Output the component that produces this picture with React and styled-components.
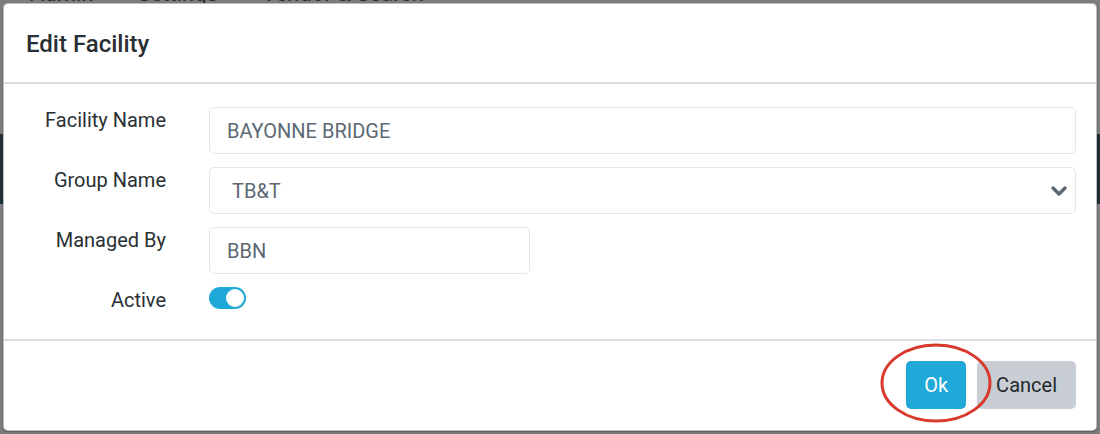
import React from "react";
import styled, { createGlobalStyle } from "styled-components";

const Global = createGlobalStyle`
  html, body { margin: 0; padding: 0; }
  body {
    width: 1100px;
    height: 434px;
    overflow: hidden;
    background: #7d7d7d;
    font-family: Roboto, "Liberation Sans", Arial, sans-serif;
  }
  * { box-sizing: border-box; }
`;

const Backdrop = styled.div`
  position: relative;
  width: 1100px;
  height: 434px;
  overflow: hidden;
  background: #7d7d7d;
  display: flex;
  flex-direction: column;
`;

const NavBar = styled.div`
  display: flex;
  gap: 44px;
  height: 20px;
  margin-top: -16px;
  padding-left: 30px;
  align-items: flex-end;
  font-size: 22px;
  line-height: 20px;
  color: #2b2b2b;
`;

const SideRow = styled.div`
  display: flex;
  justify-content: space-between;
  margin-top: 130px;
`;

const SideStripe = styled.div`
  width: 4px;
  height: 70px;
  background: #1f303a;
`;

const Modal = styled.div`
  position: absolute;
  top: 3px;
  left: 3px;
  width: 1094px;
  height: 428px;
  background: #fff;
  border: 1px solid rgba(0, 0, 0, 0.25);
  border-radius: 5px;
  box-shadow: 0 1px 2px rgba(0, 0, 0, 0.35);
  display: flex;
  flex-direction: column;
`;

const Header = styled.div`
  height: 80px;
  flex: none;
  display: flex;
  align-items: center;
  padding: 0 22px;
  border-bottom: 2px solid #d9dfe2;
`;

const Title = styled.h2`
  margin: 0;
  font-size: 24px;
  font-weight: 500;
  color: #2a2f33;
  line-height: 1.2;
  padding-top: 2px;
`;

const Body = styled.div`
  flex: 1;
  padding: 23px 20px 0 20px;
  display: flex;
  flex-direction: column;
  gap: 13px;
`;

const Row = styled.div`
  display: grid;
  grid-template-columns: 142px 1fr;
  column-gap: 43px;
  align-items: start;
`;

const Label = styled.label`
  text-align: right;
  font-size: 20px;
  line-height: 24px;
  padding-top: 1px;
  color: #2a2f33;
`;

const Input = styled.input`
  display: block;
  width: ${(p) => p.$width || "100%"};
  height: 47px;
  border: 1px solid #e4e7ea;
  border-radius: 5px;
  padding: 0 17px;
  font-family: inherit;
  font-size: 20px;
  color: #5c6873;
  background: #fff;
  outline: none;
`;

const SelectBox = styled.div`
  height: 47px;
  border: 1px solid #e4e7ea;
  border-radius: 5px;
  padding: 0 7px 0 22px;
  display: flex;
  align-items: center;
  justify-content: space-between;
  font-size: 20px;
  color: #5c6873;
`;

const Toggle = styled.div`
  width: 37px;
  height: 22px;
  border-radius: 11px;
  background: #20a8d8;
  display: flex;
  align-items: center;
  justify-content: flex-end;
  padding: 0 2px;
`;

const Knob = styled.span`
  width: 18px;
  height: 18px;
  border-radius: 50%;
  background: #fff;
`;

const Footer = styled.div`
  height: 91px;
  flex: none;
  border-top: 2px solid #d9dfe2;
  display: flex;
  align-items: center;
  justify-content: flex-end;
  gap: 11px;
  padding: 0 20px 2px 0;
`;

const Button = styled.button`
  height: 48px;
  padding: 0 ${(p) => (p.$primary ? "18px" : "19px")};
  border: none;
  border-radius: 5px;
  font-family: inherit;
  font-size: 20px;
  background: ${(p) => (p.$primary ? "#20a8d8" : "#c8ced3")};
  color: ${(p) => (p.$primary ? "#fff" : "#23282c")};
`;

const Marked = styled.div`
  position: relative;
  display: flex;
`;

const Circle = styled.svg`
  position: absolute;
  left: -26px;
  top: -18px;
  pointer-events: none;
  overflow: visible;
`;

const Chevron = () => (
  <svg width="18" height="12" viewBox="0 0 18 12">
    <polyline
      points="3,3 9,9 15,3"
      fill="none"
      stroke="#5c6873"
      strokeWidth="3.4"
      strokeLinecap="round"
      strokeLinejoin="round"
    />
  </svg>
);

export default function App() {
  return (
    <>
      <Global />
      <Backdrop>
        <NavBar>
          <span>Admin</span>
          <span>Settings</span>
          <span>Vendor &amp; Search</span>
        </NavBar>
        <SideRow>
          <SideStripe />
          <SideStripe />
        </SideRow>
        <Modal>
          <Header>
            <Title>Edit Facility</Title>
          </Header>
          <Body>
            <Row>
              <Label>Facility Name</Label>
              <Input defaultValue="BAYONNE BRIDGE" />
            </Row>
            <Row>
              <Label>Group Name</Label>
              <SelectBox>
                <span>TB&amp;T</span>
                <Chevron />
              </SelectBox>
            </Row>
            <Row>
              <Label>Managed By</Label>
              <Input defaultValue="BBN" $width="321px" />
            </Row>
            <Row>
              <Label>Active</Label>
              <Toggle>
                <Knob />
              </Toggle>
            </Row>
          </Body>
          <Footer>
            <Marked>
              <Button $primary>Ok</Button>
              <Circle width="112" height="80" viewBox="0 0 112 80">
                <ellipse
                  cx="56"
                  cy="40"
                  rx="54"
                  ry="38"
                  fill="none"
                  stroke="#d8392b"
                  strokeWidth="3"
                />
              </Circle>
            </Marked>
            <Button>Cancel</Button>
          </Footer>
        </Modal>
      </Backdrop>
    </>
  );
}
